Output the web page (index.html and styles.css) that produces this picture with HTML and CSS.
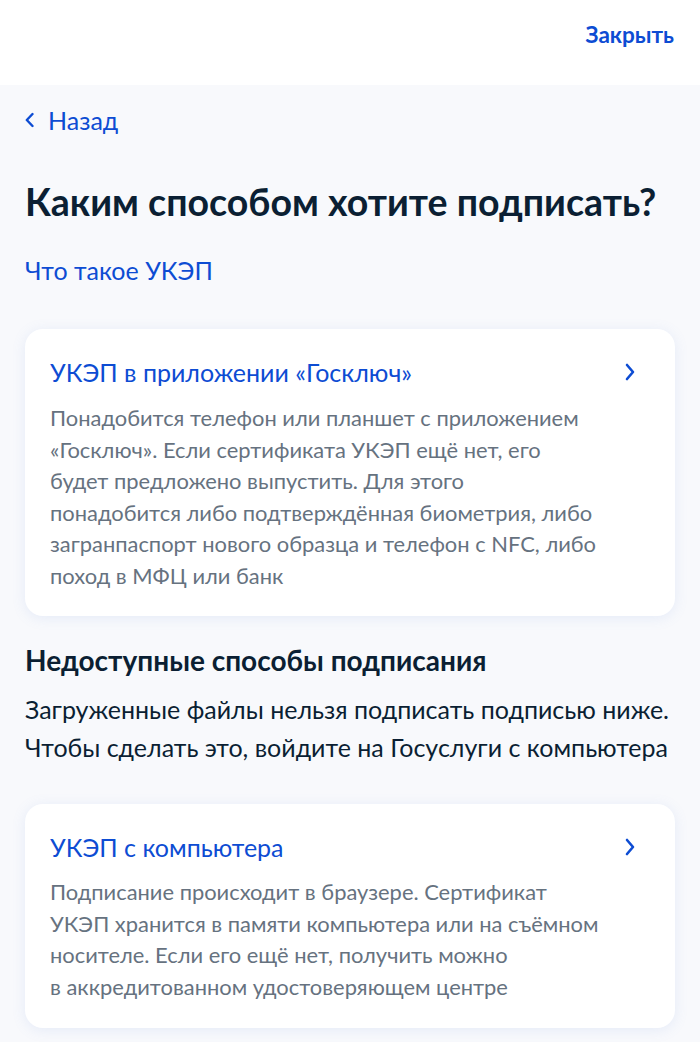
FILE: index.html
```html
<!DOCTYPE html>
<html lang="ru">
<head>
<meta charset="utf-8">
<title>Подписание</title>
<link rel="stylesheet" href="styles.css">
</head>
<body>
<header class="topbar">
  <a class="close-link" href="#">Закрыть</a>
</header>
<main class="content">
  <a class="back-link" href="#">
    <svg class="back-icon" width="9" height="16" viewBox="0 0 9 16"><path d="M7.5 2 L1.8 8 L7.5 14" fill="none" stroke="#0d4cd3" stroke-width="2.4" stroke-linecap="round" stroke-linejoin="round"/></svg>
    <span>Назад</span>
  </a>
  <h1 class="title">Каким способом хотите подписать?</h1>
  <a class="info-link" href="#">Что такое УКЭП</a>

  <section class="card">
    <div class="card-head">
      <span class="card-title">УКЭП в приложении «Госключ»</span>
      <svg class="chev" width="10" height="18" viewBox="0 0 10 18"><path d="M2 2 L8 9 L2 16" fill="none" stroke="#0d4cd3" stroke-width="2.6" stroke-linecap="round" stroke-linejoin="round"/></svg>
    </div>
    <p class="card-text">Понадобится телефон или планшет с приложением<br>«Госключ». Если сертификата УКЭП ещё нет, его<br>будет предложено выпустить. Для этого<br>понадобится либо подтверждённая биометрия, либо<br>загранпаспорт нового образца и телефон с NFC, либо<br>поход в МФЦ или банк</p>
  </section>

  <h2 class="subtitle">Недоступные способы подписания</h2>
  <p class="note">Загруженные файлы нельзя подписать подписью ниже.<br>Чтобы сделать это, войдите на Госуслуги с компьютера</p>

  <section class="card card-second">
    <div class="card-head">
      <span class="card-title">УКЭП с компьютера</span>
      <svg class="chev" width="10" height="18" viewBox="0 0 10 18"><path d="M2 2 L8 9 L2 16" fill="none" stroke="#0d4cd3" stroke-width="2.6" stroke-linecap="round" stroke-linejoin="round"/></svg>
    </div>
    <p class="card-text card-text-second">Подписание происходит в браузере. Сертификат<br>УКЭП хранится в памяти компьютера или на съёмном<br>носителе. Если его ещё нет, получить можно<br>в аккредитованном удостоверяющем центре</p>
  </section>
</main>
</body>
</html>
```
FILE: styles.css
```css
* { box-sizing: border-box; }
html, body { margin: 0; padding: 0; }
body {
  font-family: Lato, "Noto Sans", sans-serif;
  background: #f8f9fc;
  color: #0b1f33;
  width: 700px;
  height: 1042px;
  overflow: hidden;
}
a { text-decoration: none; }
.topbar {
  height: 85px;
  background: #ffffff;
  display: flex;
  justify-content: flex-end;
  align-items: center;
  padding: 0 26px 16px 0;
}
.close-link {
  color: #0d4cd3;
  font-size: 22.5px;
  line-height: 28px;
  font-weight: 700;
}
.content {
  padding: 21px 25px 0 25px;
}
.back-link {
  display: inline-flex;
  align-items: center;
  gap: 14px;
  color: #0d4cd3;
  font-size: 25px;
  line-height: 28px;
}
.back-icon { display: block; }
.title {
  margin: 46px 0 0 0;
  font-size: 37.5px;
  line-height: 44px;
  font-weight: 700;
  color: #0b1f33;
}
.info-link {
  display: block;
  margin-top: 31px;
  font-size: 25px;
  line-height: 30px;
  color: #0d4cd3;
}
.card {
  background: #ffffff;
  border-radius: 18px;
  box-shadow: 0 2px 14px rgba(102, 140, 220, 0.13);
  padding: 27px 25px 25px 25px;
  margin-top: 44px;
}
.card-head {
  display: flex;
  justify-content: space-between;
  align-items: center;
  padding-right: 15px;
}
.card-title {
  font-size: 25px;
  line-height: 32px;
  color: #0d4cd3;
}
.chev { display: block; }
.card-text {
  margin: 14px 0 0 0;
  font-size: 21.9px;
  line-height: 31.5px;
  color: #66727f;
  white-space: nowrap;
}
.card-text-second {
  margin-top: 13px;
  line-height: 31.7px;
}
.subtitle {
  margin: 27px 0 0 0;
  font-size: 28px;
  line-height: 34px;
  font-weight: 700;
  color: #0b1f33;
}
.note {
  margin: 13px 0 0 0;
  font-size: 25px;
  line-height: 38px;
  color: #0b1f33;
  white-space: nowrap;
}
.card-second { margin-top: 38px; }
```
